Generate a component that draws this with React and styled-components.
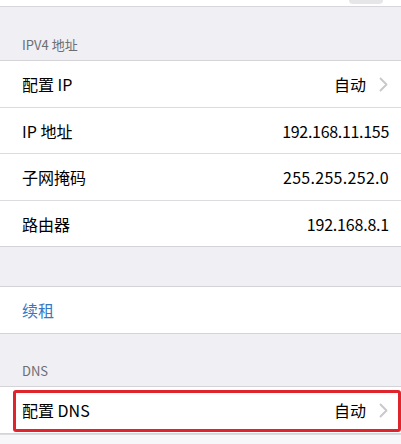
import React from 'react';
import styled, { createGlobalStyle } from 'styled-components';

const Global = createGlobalStyle`
  html, body {
    margin: 0;
    padding: 0;
    background: #efeff4;
  }
  body {
    font-family: "Noto Sans CJK SC", "Noto Sans", sans-serif;
  }
`;

const Page = styled.div`
  width: 401px;
  height: 444px;
  overflow: hidden;
  background: #efeff4;
  display: flex;
  flex-direction: column;
`;

const TopStrip = styled.div`
  height: 6px;
  background: #fff;
  border-bottom: 1px solid #d6d6db;
  position: relative;
  & span {
    position: absolute;
    right: 18px;
    top: 0;
    width: 34px;
    height: 4px;
    border-radius: 0 0 10px 10px;
    background: #e6e6ea;
  }
`;

const Header = styled.div`
  height: ${({ h }) => h}px;
  padding: 0 0 7px 22px;
  box-sizing: border-box;
  display: flex;
  align-items: flex-end;
  font-size: 13px;
  line-height: 16px;
  color: #6d6d72;
`;

const Gap = styled.div`
  height: ${({ h }) => h}px;
`;

const Group = styled.div`
  background: #fff;
  border-top: 1px solid #d3d3d8;
  border-bottom: 1px solid #d3d3d8;
`;

const Row = styled.div`
  position: relative;
  height: ${({ h }) => h || 46}px;
  display: flex;
  align-items: center;
  justify-content: space-between;
  padding: 0 12px 0 22px;
  font-size: 16px;
  color: ${({ link }) => (link ? '#3778c2' : '#000')};
  & + & {
    border-top: 1px solid #dcdce0;
  }
  & + &::before {
    content: '';
    position: absolute;
    top: -1px;
    left: 0;
    width: 20px;
    height: 1px;
    background: #fff;
  }
`;

const Value = styled.div`
  display: flex;
  align-items: center;
  gap: 13px;
  color: #000;
  letter-spacing: ${({ ls }) => ls || 0}px;
`;

const Chevron = styled.svg`
  width: 9px;
  height: 15px;
  margin-right: 1px;
`;

const Mark = styled.div`
  position: absolute;
  top: 3px;
  bottom: 1px;
  left: 13px;
  right: 0;
  border: 3px solid #e0242b;
  border-radius: 3px;
  pointer-events: none;
`;

const Rest = styled.div`
  flex: 1;
  background: #f7f7f9;
  border-top: 1px solid #dcdce0;
`;

function Arrow() {
  return (
    <Chevron viewBox="0 0 9 15">
      <path d="M1.5 1.5 L7.5 7.5 L1.5 13.5" fill="none" stroke="#c7c7cc" strokeWidth="1.8" strokeLinecap="round" strokeLinejoin="round" />
    </Chevron>
  );
}

export default function App() {
  return (
    <>
      <Global />
      <Page>
        <TopStrip><span /></TopStrip>
        <Header h={53}>IPV4 地址</Header>
        <Group>
          <Row>
            <span>配置 IP</span>
            <Value>自动<Arrow /></Value>
          </Row>
          <Row h={45}>
            <span>IP 地址</span>
            <Value ls={-0.3}>192.168.11.155</Value>
          </Row>
          <Row>
            <span>子网掩码</span>
            <Value ls={0.3}>255.255.252.0</Value>
          </Row>
          <Row h={45}>
            <span>路由器</span>
            <Value ls={-0.2}>192.168.8.1</Value>
          </Row>
        </Group>
        <Gap h={39} />
        <Group>
          <Row link>续租</Row>
        </Group>
        <Header h={52}>DNS</Header>
        <Group>
          <Row>
            <span>配置 DNS</span>
            <Value>自动<Arrow /></Value>
            <Mark />
          </Row>
        </Group>
        <Rest />
      </Page>
    </>
  );
}
